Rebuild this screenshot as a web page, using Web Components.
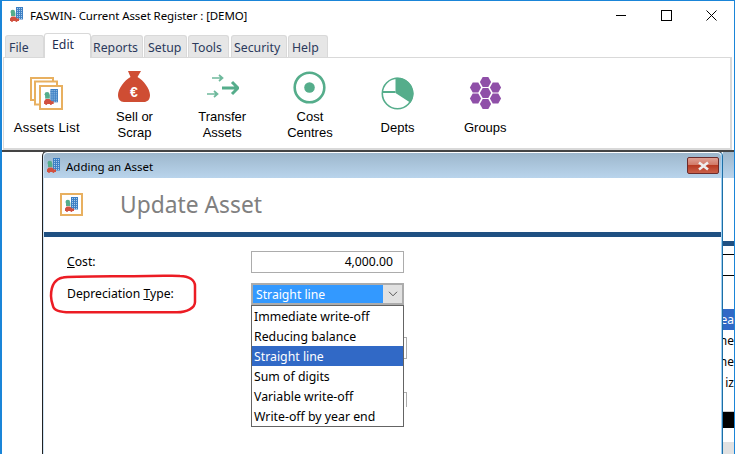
<!DOCTYPE html>
<html><head><meta charset="utf-8"><title>FASWIN</title>
<style>html,body{margin:0;padding:0;background:#fff;overflow:hidden}</style>
</head><body>
<svg width="0" height="0" style="position:absolute"><defs><path id="hex" d="M-5.6 0L-2.800-4.900H2.800L5.600 0 2.800 4.900H-2.800Z" fill="#8f4fa8"/></defs></svg>

<template id="t-bld"><style>
:host{display:block;width:13px;height:15px}
svg{display:block;width:100%;height:100%}
</style><svg viewBox="0 0 13 15">
<rect x="6" y="0" width="7" height="12.500" fill="#3d7fc4"/>
<path d="M7.500 1v11M9.500 1v11M11.500 1v11" stroke="#b5d5f0" stroke-width=".9"/>
<path d="M6 2.500h7M6 4.500h7M6 6.500h7M6 8.500h7M6 10.500h7" stroke="#3d7fc4" stroke-width=".9"/>
<circle cx="2.800" cy="5" r="2.300" fill="#55ad8b"/><rect x="1" y="5.500" width="4.400" height="3.500" fill="#55ad8b"/>
<path d="M0 14v-2.600l1.600-2h3.600l1.800 2H9V14H7.400a1 1 0 0 1-2 0H3a1 1 0 0 1-2 0Z" fill="#d1503f"/>
</svg></template>

<template id="t-app"><style>
:host{display:flex;flex-direction:column;width:735px;height:454px;box-sizing:border-box;border:solid #1a85d8;border-width:1px 1px 0 2px;background:#fff;overflow:hidden;position:relative;font-family:"Noto Sans",sans-serif}
</style><slot></slot></template>

<template id="t-title"><style>
:host{display:flex;align-items:center;height:30px;flex:none;padding-left:28px;font:11.500px "Noto Sans",sans-serif;letter-spacing:-.1px;color:#000;position:relative}
fas-bld{position:absolute;left:8px;top:6px}
.ctl{margin-left:auto;display:flex}
.ctl svg{width:45px;height:30px;display:block}
span{margin-top:-1px}
</style><fas-bld></fas-bld><span><slot></slot></span>
<div class="ctl">
<svg viewBox="0 0 45 30"><path d="M17 14.500h10" stroke="#000"/></svg>
<svg viewBox="0 0 45 30"><rect x="17.500" y="9.500" width="10" height="10" fill="none" stroke="#000"/></svg>
<svg viewBox="0 0 45 30"><path d="M17.500 9.500l10 10M27.500 9.500l-10 10" stroke="#000" fill="none"/></svg>
</div></template>

<template id="t-tabs"><style>
:host{display:flex;align-items:flex-end;height:25px;flex:none;padding-left:3px;margin-top:1px;position:relative;z-index:1}
</style><slot></slot></template>

<template id="t-tab"><style>
:host{display:flex;align-items:center;height:22px;box-sizing:border-box;background:#e6e6e6;border:1px solid #d9d9d9;border-bottom:0;border-radius:3px 3px 0 0;font:12.300px "Noto Sans",sans-serif;color:#2b3a5c;padding-top:1px;flex:none}
:host([active]){height:25px;background:#fff;margin-bottom:-1px;padding-bottom:4px;color:#1f2d50}
</style><slot></slot></template>

<template id="t-ribbon"><style>
:host{display:flex;height:93px;flex:none;box-sizing:border-box;margin:0 0 0 1px;width:729px;border:1px solid #d9d9d9;border-width:1px 2px 2px 1px;background:#fff}
</style><slot></slot></template>

<template id="t-rbtn"><style>
:host{display:flex;flex-direction:column;align-items:center;justify-content:center;width:87.700px;flex:none;padding-top:6px;box-sizing:border-box;font:13px/16px "Liberation Sans",sans-serif;color:#000;text-align:center}
.i{height:33px;width:33px;flex:none}
.l{height:32px;margin-top:5px;white-space:nowrap}
:host([single]) .l{height:16px;margin-top:10px}
</style><div class="i"><slot name="icon"></slot></div><div class="l"><slot></slot></div></template>

<template id="t-bg"><style>
:host{display:block;flex:1;position:relative;overflow:hidden;border-top:2px solid #444}
.s{position:absolute;left:721px;right:0;top:0;bottom:0;font:12px "Noto Sans",sans-serif;overflow:hidden}
.b{position:absolute;left:0;right:0}
.t{position:absolute;right:0;line-height:20px;height:20px;color:#000;white-space:nowrap}
</style>
<div class="s">
<div class="b" style="top:0;height:26px;background:linear-gradient(#9db7cc,#b9d4ec)"></div>
<div class="b" style="top:89px;height:5px;background:#1f5082"></div>
<div class="b" style="top:102px;height:1px;background:#000"></div>
<div class="b" style="top:123px;height:1px;background:#000"></div>
<div class="b" style="top:157px;height:21px;background:#3169c6"></div>
<div class="t" style="top:158px;color:#fff">ea</div>
<div class="t" style="top:179px">ne</div>
<div class="t" style="top:200px">ne</div>
<div class="t" style="top:221px">iz</div>
<div class="b" style="top:259px;height:1px;background:#ccc"></div>
<div class="b" style="top:260px;height:16px;background:#000"></div>
<div class="b" style="top:290px;bottom:0;background:#e1e1e1"></div>
</div>
<slot></slot></template>

<template id="t-dlg"><style>
:host{display:block;position:absolute;left:40px;top:-1px;width:681px;height:320px;box-sizing:border-box;background:#fff;border:1px solid #222;border-right-color:#1d6fa5;border-bottom:0;border-radius:5px 5px 0 0;box-shadow:inset 1px 0 0 #cfe4f5,inset -1px 0 0 #9fd0f5}
.tb{height:25px;display:flex;align-items:center;background:linear-gradient(#9db7cc,#b9d4ec);font:11.500px "Noto Sans",sans-serif;color:#000;padding-left:22px;position:relative;margin:1px 1px 0;border-radius:4px 4px 0 0}
.tb span{margin-top:2px}
.tb fas-bld{position:absolute;left:3px;top:5px}
.x{position:absolute;right:2px;top:4px;width:32px;height:17px;box-sizing:border-box;border:1px solid #6b2b2b;border-radius:2px;background:linear-gradient(#dfa093 0,#d27a68 45%,#b83a22 50%,#c9604a 100%);display:flex;align-items:center;justify-content:center}
.hd{height:54px;display:flex;align-items:center;margin:0 1px;position:relative}
.logo{width:23px;height:23px;box-sizing:border-box;border:2px solid #e8b060;margin-left:16px;margin-top:-1px;flex:none;display:flex;align-items:center;justify-content:center}
h1{margin:0 0 0 37px;font:400 22.800px "Noto Sans",sans-serif;color:#808080;line-height:1}
.rule{height:5px;background:#1f5082;margin:0 0 0 1px;width:677px}
.bd{padding:14px 0 0 24px;display:block}
</style>
<div class="tb"><fas-bld></fas-bld><span><slot name="caption"></slot></span>
<div class="x"><svg style="width:15px;height:10px;display:block" viewBox="0 0 15 10"><path d="M3 1.500l9 7M12 1.500l-9 7" stroke="#eee" stroke-width="2.600" fill="none"/></svg></div></div>
<div class="hd"><div class="logo"><fas-bld></fas-bld></div><h1><slot name="heading"></slot></h1></div>
<div class="rule"></div>
<div class="bd"><slot></slot></div></template>

<template id="t-row"><style>
:host{display:flex;align-items:center;height:22px;margin-bottom:10px;font:12.200px "Noto Sans",sans-serif;color:#000;position:relative}
.lb{width:184px;flex:none;margin-top:-2px}
</style><div class="lb"><slot name="label"></slot></div><slot></slot></template>

<template id="t-input"><style>
:host{display:block;box-sizing:border-box;width:153px;height:22px;border:1px solid #acacac;background:#fff;text-align:right;font:12.200px/20px "Noto Sans",sans-serif;padding-right:10px}
</style><slot></slot></template>

<template id="t-combo"><style>
:host{display:block;position:relative;width:153px;height:22px;font:12.200px "Noto Sans",sans-serif}
.box{box-sizing:border-box;height:22px;border:2px solid #acacac;display:flex;background:#e1e1e1}
.val{flex:1;background:#3399ff;color:#fff;line-height:20px;height:18px;padding-left:3px}
.btn{width:19px;flex:none;display:flex;align-items:center;justify-content:center}
.list{position:absolute;left:0;top:22px;width:153px;box-sizing:border-box;border:1px solid #646464;background:#fff;z-index:2}
</style><div class="box"><div class="val"><slot name="value"></slot></div><div class="btn"><svg width="10" height="6" viewBox="0 0 10 6"><path d="M1 .8l4 4 4-4" fill="none" stroke="#555"/></svg></div></div>
<div class="list"><slot></slot></div></template>

<template id="t-opt"><style>
:host{display:block;height:20px;padding-left:2px;font:12.300px/22px "Noto Sans",sans-serif;color:#000;white-space:nowrap}
:host([selected]){background:#3169c6;color:#fff}
</style><slot></slot></template>

<script>
for (const [tag,tpl] of [['fas-bld','t-bld'],['fas-app','t-app'],['fas-title','t-title'],['fas-tabs','t-tabs'],['fas-tab','t-tab'],['fas-ribbon','t-ribbon'],['fas-rbtn','t-rbtn'],['fas-bg','t-bg'],['fas-dialog','t-dlg'],['fas-row','t-row'],['fas-input','t-input'],['fas-combo','t-combo'],['fas-opt','t-opt']]) {
  customElements.define(tag, class extends HTMLElement {
    constructor(){super();this.attachShadow({mode:'open'}).appendChild(document.getElementById(tpl).content.cloneNode(true));}
  });
}
</script>

<fas-app>
<fas-title>FASWIN- Current Asset Register : [DEMO]</fas-title>
<fas-tabs>
<fas-tab style="width:39px;padding-left:3px">File</fas-tab>
<fas-tab active style="width:47px;padding-left:7px">Edit</fas-tab>
<fas-tab style="width:52px;padding-left:1px;margin-right:1px">Reports</fas-tab>
<fas-tab style="width:43px;padding-left:3px;margin-right:1px">Setup</fas-tab>
<fas-tab style="width:41px;padding-left:3px;margin-right:2px">Tools</fas-tab>
<fas-tab style="width:56px;padding-left:2px;margin-right:1px">Security</fas-tab>
<fas-tab style="width:40px;padding-left:3px">Help</fas-tab>
</fas-tabs>
<fas-ribbon>
<fas-rbtn single style="margin-left:-1px;letter-spacing:.3px"><svg slot="icon" width="33" height="33" viewBox="0 0 33 33"><g fill="#fff" stroke="#e8b060" stroke-width="2"><rect x="1" y="1" width="22" height="22"/><rect x="5" y="4.500" width="22" height="23"/><rect x="10" y="9" width="22" height="23"/></g><svg x="14" y="12" width="14" height="16" viewBox="0 0 13 15"><rect x="6" y="0" width="7" height="12.500" fill="#3d7fc4"/><path d="M7.500 1v11M9.500 1v11M11.500 1v11" stroke="#b5d5f0" stroke-width=".9"/><path d="M6 2.500h7M6 4.500h7M6 6.500h7M6 8.500h7M6 10.500h7" stroke="#3d7fc4" stroke-width=".9"/><circle cx="2.800" cy="5" r="2.300" fill="#55ad8b"/><rect x="1" y="5.500" width="4.400" height="3.500" fill="#55ad8b"/><path d="M0 14v-2.600l1.600-2h3.600l1.800 2H9V14H7.400a1 1 0 0 1-2 0H3a1 1 0 0 1-2 0Z" fill="#d1503f"/></svg></svg>Assets List</fas-rbtn>
<fas-rbtn><svg slot="icon" width="33" height="33" viewBox="0 0 33 33"><path d="M10 0h13l-3.500 6c6 3 12.500 12 12.500 18 0 5-3 7-6 7H6c-4 0-6-3-6-7C0 18 6.500 9 12.500 6Z" fill="#cf4d33"/><text x="16" y="26" text-anchor="middle" font-family="Liberation Sans" font-weight="700" font-size="14" fill="#fff">€</text></svg>Sell or<br>Scrap</fas-rbtn>
<fas-rbtn><svg slot="icon" width="33" height="33" viewBox="0 0 33 33"><g fill="none" stroke="#55ad8b"><path d="M6 7h10M13 4l3.500 3-3.500 3M1 23h10M8 20l3.500 3-3.500 3" stroke-width="1.700" opacity=".85"/><path d="M16 17h15M26 11l6 6-6 6" stroke-width="3"/></g></svg>Transfer<br>Assets</fas-rbtn>
<fas-rbtn><svg slot="icon" width="33" height="33" viewBox="0 0 33 33"><circle cx="16.500" cy="16.500" r="14.800" fill="none" stroke="#55ad8b" stroke-width="2.600"/><circle cx="16.500" cy="16.500" r="5.300" fill="#55ad8b"/></svg>Cost<br>Centres</fas-rbtn>
<fas-rbtn single><svg slot="icon" width="33" height="33" viewBox="0 0 33 33"><circle cx="16.500" cy="16.500" r="15.200" fill="#fff" stroke="#55ad8b" stroke-width="1.600"/><path d="M14.500.8a16 16 0 0 1 15 25L14.500 16Z" fill="#55ad8b"/><path d="M1.500 15h13" stroke="#55ad8b" stroke-width="2"/></svg>Depts</fas-rbtn>
<fas-rbtn single><svg slot="icon" width="33" height="33" viewBox="0 0 33 33"><use href="#hex" x="16.500" y="5"/><use href="#hex" x="16.500" y="16"/><use href="#hex" x="16.500" y="27"/><use href="#hex" x="6.500" y="10.500"/><use href="#hex" x="6.500" y="21.500"/><use href="#hex" x="26.500" y="10.500"/><use href="#hex" x="26.500" y="21.500"/></svg>Groups</fas-rbtn>
</fas-ribbon>
<fas-bg>
<fas-dialog>
<span slot="caption">Adding an Asset</span>
<span slot="heading">Update Asset</span>
<fas-row><span slot="label"><u>C</u>ost:</span><fas-input>4,000.00</fas-input></fas-row>
<fas-row style="z-index:2"><span slot="label">Depreciation <u>T</u>ype:</span>
<fas-combo><span slot="value">Straight line</span>
<fas-opt>Immediate write-off</fas-opt><fas-opt>Reducing balance</fas-opt><fas-opt selected>Straight line</fas-opt><fas-opt>Sum of digits</fas-opt><fas-opt>Variable write-off</fas-opt><fas-opt>Write-off by year end</fas-opt>
</fas-combo></fas-row>
<fas-row style="margin-top:32px"><fas-input style="width:156px"></fas-input></fas-row>
<fas-row style="margin-top:33px;height:15px"><fas-input style="width:156px;height:15px;border-bottom:0"></fas-input></fas-row>
<svg style="position:absolute;left:6px;top:121px;z-index:3" width="150" height="44" viewBox="0 0 150 44"><path d="M2 23C2 12 6 6 14 4.500 20 3 60 3.500 100 3 115 3 125 2.500 131 3 140 3 146 7 146 13V29C146 35 138 39 128 39.300H21C12 39.300 5 38 4 33 3 30 2 27 2 23Z" fill="none" stroke="#ec1c24" stroke-width="2.500"/></svg>
</fas-dialog>
</fas-bg>
</fas-app>
</body></html>
